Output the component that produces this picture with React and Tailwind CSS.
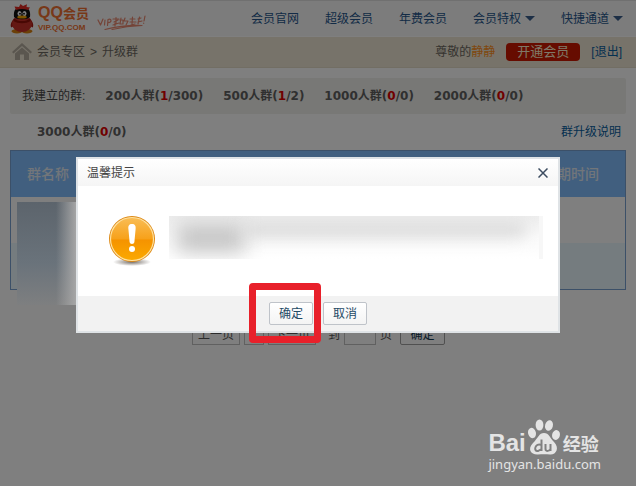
import React from "react";

const NAV = [
  { label: "会员官网" },
  { label: "超级会员" },
  { label: "年费会员" },
  { label: "会员特权", menu: true },
  { label: "快捷通道", menu: true },
];

const GROUPS = [
  { size: "200", used: 1, total: 300 },
  { size: "500", used: 1, total: 2 },
  { size: "1000", used: 0, total: 0 },
  { size: "2000", used: 0, total: 0 },
];

function GroupCount({ size, used, total }) {
  return (
    <span className="font-bold whitespace-nowrap text-[#606060] font-['DejaVu_Sans','Noto_Sans_CJK_SC',sans-serif]">
      {size}人群(<span className="text-[#e00000]">{used}</span>/{total})
    </span>
  );
}

function Penguin() {
  return (
    <svg viewBox="0 0 24 30" className="h-[30px] w-6 shrink-0" aria-hidden="true">
      <ellipse cx="7" cy="27.3" rx="5.5" ry="2.2" fill="#d88010" />
      <ellipse cx="17" cy="27.3" rx="5.5" ry="2.2" fill="#d88010" />
      <path d="M4.5 14 C1 18 0 21 1.2 23.5 L4 22 Z M19.5 14 C23 18 24 21 22.8 23.5 L20 22 Z" fill="#a81810" />
      <ellipse cx="12" cy="20" rx="10" ry="8" fill="#c83028" />
      <path d="M4 13 C3 5 7 3 12 3 C17 3 21 5 20 13 C18 16 6 16 4 13 Z" fill="#101010" />
      <path d="M6 6 L4.5 2.5 L9 3 L10.5 0 L13 2 L17 .3 L16.5 3 L20 3.5 L18 6 C14 4.500 10 4.500 6 6 Z" fill="#e02820" />
      <ellipse cx="9.5" cy="9.500" rx="2" ry="2.5" fill="#fff" />
      <ellipse cx="14.5" cy="9.500" rx="2" ry="2.5" fill="#fff" />
      <circle cx="10" cy="9.7" r=".9" fill="#000" />
      <circle cx="14" cy="9.7" r=".9" fill="#000" />
      <ellipse cx="12" cy="13" rx="4.8" ry="1.6" fill="#f8a800" />
      <path d="M4 14.2 C8 18 16 18 20 14.2 L20.5 17 C16 20 8 20 3.5 17 Z" fill="#901008" />
    </svg>
  );
}

function Slogan() {
  return (
    <svg viewBox="0 0 50 16" className="h-4 w-[50px] shrink-0" fill="none" stroke="#e88870" strokeWidth="1.2" strokeLinecap="round" strokeLinejoin="round" aria-hidden="true">
      <path d="M1 5 L3.5 10 L6 4 M8 5 L7.5 10 M10.5 10.500 L11 4.500 C15 3 15 7.500 11 7.700" />
      <path d="M16 4 H22 M19 2.500 V8 M17 7 L21 5 M16 10 L22 8 M18 8 V11 M24 3 L23 9 M23 5 H26 V9 H23 M28 3 L27 6 H31 L29 10 M33 4 H38 M35.500 2 L35 9 M33 7 H39 M34 10 L38 9 M41 4 L44 3 M42.500 2 L41 9 M41 7 L45 6" />
      <path d="M48 1 L47 6 M46.700 8 V8.300 M8 14.500 C20 11.500 34 10 45 10.500 C34 11 24 12.500 15 14.500" />
    </svg>
  );
}

function Caret() {
  return <span className="border-x-[5px] border-t-[5px] border-x-transparent border-t-[#3b5f8c]" />;
}

function Warning() {
  return (
    <svg viewBox="0 0 50 52" className="h-[52px] w-[50px] shrink-0" aria-hidden="true">
      <defs>
        <linearGradient id="orb" x1="0" y1="0" x2="0" y2="1">
          <stop offset="0" stopColor="#f9bd55" />
          <stop offset=".5" stopColor="#f7a11a" />
          <stop offset=".52" stopColor="#f59300" />
          <stop offset="1" stopColor="#fba900" />
        </linearGradient>
        <radialGradient id="orbShade">
          <stop offset="0" stopColor="#554c44" stopOpacity=".8" />
          <stop offset="1" stopColor="#554c44" stopOpacity="0" />
        </radialGradient>
      </defs>
      <ellipse cx="25" cy="47" rx="19" ry="4" fill="url(#orbShade)" />
      <circle cx="25" cy="24" r="23" fill="#dd8813" />
      <circle cx="25" cy="24" r="21.500" fill="url(#orb)" stroke="#ffe2a0" strokeWidth="1.200" />
      <path d="M25 9 C28 9 29 11 28.600 14 L27.400 27 C27.200 29.500 22.800 29.500 22.600 27 L21.400 14 C21 11 22 9 25 9 Z" fill="#fff" />
      <circle cx="25" cy="34" r="3" fill="#fff" />
    </svg>
  );
}

function Paw() {
  return (
    <svg viewBox="0 0 34 36" className="h-9 w-[34px] shrink-0" fill="#e4e4e4" aria-hidden="true">
      <ellipse cx="5" cy="14" rx="3.900" ry="5.200" transform="rotate(-14 5 14)" />
      <ellipse cx="12.500" cy="6" rx="3.900" ry="5.500" />
      <ellipse cx="22" cy="6.500" rx="3.900" ry="5.300" transform="rotate(14 22 6.500)" />
      <ellipse cx="29" cy="16" rx="3.900" ry="5" transform="rotate(14 29 16)" />
      <path d="M17 14 C22 14 23 19 27 23 C33 29 29 36 23 35.500 C19 35 15 35 11 35.500 C4 36 0 30 6 24 C11 19 12 14 17 14 Z" />
      <path d="M14.500 20.500 V32 M14.500 26 C8 23 6 33 11 32 L14.500 30 M18.500 25 V30 C18.500 33 23 32 23.500 30 M23.500 25 V32" fill="none" stroke="#808080" strokeWidth="2" />
    </svg>
  );
}

function DialogButton({ children }) {
  return (
    <button type="button" className="h-[23px] w-11 rounded-xs border border-[#bfc3c9] bg-linear-to-b from-white to-[#f4f4f4] text-[#1f4a66]">
      {children}
    </button>
  );
}

export default function App() {
  return (
    <div className="relative min-h-screen overflow-hidden bg-white text-xs font-['Liberation_Sans','Noto_Sans_CJK_SC',sans-serif]">
      <header className="flex h-[37px] items-center border-t border-b border-t-[#e0e0e0] border-b-[#fff] bg-[#f9f9f9] pr-[13px] pl-[10px]">
        <a href="#home" className="flex items-center gap-1">
          <Penguin />
          <span className="flex flex-col whitespace-nowrap text-[#f07030]">
            <span className="text-base leading-[18px] font-bold">
              QQ<span className="text-[13px]">会员</span>
            </span>
            <span className="text-[8px] leading-[10px] font-bold">VIP.QQ.COM</span>
          </span>
        </a>
        <span className="pt-2 pl-2"><Slogan /></span>
        <nav className="ml-auto flex gap-[26px] whitespace-nowrap">
          {NAV.map((item) => (
            <a key={item.label} href="#nav" className="flex items-center gap-1 text-[#26568c]">
              {item.label}
              {item.menu && <Caret />}
            </a>
          ))}
        </nav>
      </header>

      <div className="flex h-[31px] items-center justify-between border-b border-[#e4dcc8] bg-[#eee6d4] pr-[14px] pl-3 whitespace-nowrap text-[#6c6860]">
        <div className="flex items-center gap-[5px]">
          <svg viewBox="0 0 20 18" className="h-[18px] w-5" fill="#b4ac9e" aria-hidden="true">
            <path d="M10 0 L20 9 L18.500 10.500 L10 3 L1.500 10.500 L0 9 Z" />
            <path d="M10 4.500 L17 10.500 V17 H12 V11.500 H8 V17 H3 V10.500 Z" />
          </svg>
          <a href="#zone">会员专区</a>
          <span>&gt;</span>
          <span>升级群</span>
        </div>
        <div className="flex items-center gap-[11px]">
          <span>尊敬的<span className="text-[#ff9020]">静静</span></span>
          <button type="button" className="h-[18px] rounded-sm bg-[#cc1800] px-[11px] text-[13px] leading-[18px] text-[#fff0d0]">开通会员</button>
          <a href="#logout" className="text-[#0860a0]">[退出]</a>
        </div>
      </div>

      <main className="px-[10px] pt-[10px]">
        <div className="flex h-9 items-center gap-5 rounded-xs bg-[#f0f0ec] px-3 text-[#484848]">
          <span className="whitespace-nowrap">我建立的群:</span>
          {GROUPS.map((group) => (
            <GroupCount key={group.size} {...group} />
          ))}
        </div>
        <div className="flex h-9 items-center justify-between pr-[5px] pl-[27px]">
          <GroupCount size="3000" used={0} total={0} />
          <a href="#help" className="text-[#0860a0]">群升级说明</a>
        </div>

        <table className="w-full border border-[#78a0d0] text-left">
          <thead>
            <tr className="h-[46px] bg-[#82beff] text-sm text-[#e4ecf4]">
              <th className="pl-4 font-medium">群名称</th>
              <th className="pr-[26px] text-right font-medium">到期时间</th>
            </tr>
          </thead>
          <tbody>
            <tr className="h-[46px]"><td /><td /></tr>
            <tr className="h-[47px] bg-[#eaf8ff]"><td /><td /></tr>
          </tbody>
        </table>

        <div className="flex items-center pt-[35px] pl-[182px] whitespace-nowrap text-[#585858]">
          <button type="button" className="h-5 w-12 border border-[#c0c0c0]">上一页</button>
          <button type="button" className="ml-1 h-5 w-5 border border-[#c0c0c0]">1</button>
          <button type="button" className="ml-1 h-5 w-12 border border-[#c0c0c0]">下一页</button>
          <label htmlFor="page" className="ml-3">到</label>
          <input id="page" className="mx-1 h-5 w-8 border border-[#c0c0c0]" />
          <span>页</span>
          <button type="button" className="ml-2 h-5 w-[45px] rounded-xs border border-[#a0a0a0] text-[#103850]">确定</button>
        </div>
      </main>

      <div className="absolute inset-0 bg-black/50" />
      <div className="absolute top-[202px] left-[17px] h-[103px] w-[60px] bg-linear-to-b from-[#5c646c] via-[#6a737b] via-60% to-[#7e7f80]">
        <div className="h-full bg-linear-to-r from-transparent from-65% to-[#a8a8a8]" />
      </div>

      <div className="absolute inset-x-0 top-[157px] flex justify-center">
        <section role="dialog" aria-labelledby="tip" className="w-[484px] border-2 border-[#dfe3e6] bg-white">
          <div className="flex h-[27px] items-center justify-between bg-linear-to-b from-white to-[#f5f5f5] pr-[10px] pl-[9px]">
            <h2 id="tip" className="text-[#444]">温馨提示</h2>
            <button type="button" aria-label="关闭">
              <svg viewBox="0 0 10 10" className="size-[10px]" fill="none" stroke="#3c4c60" strokeWidth="1.500" aria-hidden="true">
                <path d="M.5 .5 L9.500 9.500 M9.500 .5 L.5 9.500" />
              </svg>
            </button>
          </div>
          <div className="flex h-[110px] items-start gap-3 pt-[29px] pr-[15px] pl-[29px]">
            <Warning />
            <div className="relative mt-px h-[43px] flex-1 overflow-hidden bg-linear-to-b from-[#ededed] via-[#fafafa] to-white">
              <div className="absolute top-2 left-2 h-7 w-[68px] bg-[#c4c4c4] blur-[10px]" />
              <div className="absolute top-2 left-[76px] h-3 w-[280px] bg-[#d4d4d4] blur-[8px]" />
              <div className="absolute right-0 h-full w-1 bg-[#f7f7f7]" />
            </div>
          </div>
          <div className="flex h-[35px] items-center justify-center gap-[10px] bg-[#f2f2f2]">
            <DialogButton>确定</DialogButton>
            <DialogButton>取消</DialogButton>
          </div>
        </section>
        <div className="absolute top-[126px] left-1/2 -ml-[69px] h-[60px] w-[72px] rounded-sm border-[7px] border-[#e8202a]" />
      </div>

      <div className="absolute right-[35px] bottom-[13px] flex flex-col text-[#e4e4e4]">
        <div className="flex items-end gap-px">
          <span className="text-2xl leading-6 font-bold">Bai</span>
          <Paw />
          <span className="pl-px text-lg leading-6 font-bold font-['Noto_Sans_CJK_SC',sans-serif]">经验</span>
        </div>
        <span className="text-[13px] leading-[18px] font-['Noto_Sans',sans-serif]">jingyan.baidu.com</span>
      </div>
    </div>
  );
}
